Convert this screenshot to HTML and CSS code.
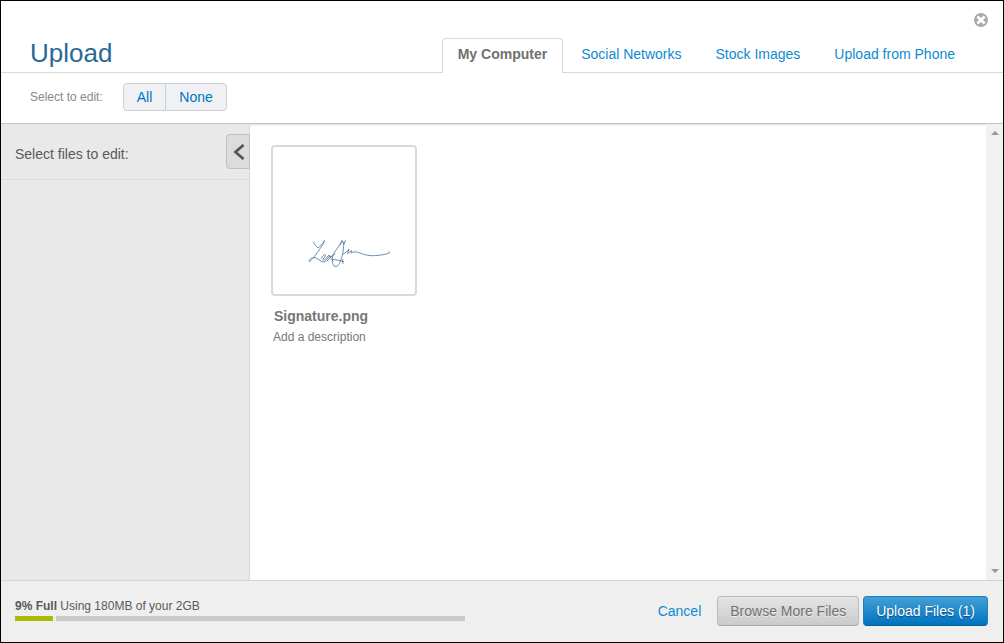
FILE: index.html
```html
<!DOCTYPE html>
<html lang="en">
<head>
    <meta charset="UTF-8">
    <meta name="viewport" content="width=device-width, initial-scale=1.0">
    <title>Upload</title>
    <link rel="stylesheet" href="styles.css">
</head>
<body>
    <div class="dialog">
        <button type="button" class="close" aria-label="Close">
            <svg width="14" height="14" viewBox="0 0 14 14">
                <circle cx="7" cy="7" r="7" fill="#aaa"/>
                <path d="M3.400 3.400l7.200 7.200M10.600 3.400L3.400 10.600" stroke="#fff" stroke-width="2.800"/>
            </svg>
        </button>

        <header class="header">
            <h1>Upload</h1>
            <nav class="tabs">
                <a href="#" class="tab active">My Computer</a>
                <a href="#" class="tab">Social Networks</a>
                <a href="#" class="tab">Stock Images</a>
                <a href="#" class="tab">Upload from Phone</a>
            </nav>
        </header>

        <div class="toolbar">
            <span class="toolbar-label" id="selectLabel">Select to edit:</span>
            <div class="btn-group" role="group" aria-labelledby="selectLabel">
                <button type="button">All</button>
                <button type="button">None</button>
            </div>
        </div>

        <main class="main">
            <aside class="sidebar">
                <div class="sidebar-head">
                    <p>Select files to edit:</p>
                    <button type="button" class="toggle" aria-label="Collapse panel">
                        <svg width="12" height="16" viewBox="0 0 12 16">
                            <path d="M10.500 1L2.500 8l8 7" fill="none" stroke="#555" stroke-width="2.800"/>
                        </svg>
                    </button>
                </div>
            </aside>

            <section class="files">
                <figure class="file">
                    <div class="thumb">
                        <svg width="84" height="30" viewBox="0 0 84 30" role="img" aria-label="Signature">
                            <g fill="none" stroke="#5f7fa6" stroke-width="0.900" stroke-linecap="round" stroke-linejoin="round">
                                <path d="M5.500 4c1 2 2 4 4.500 6 2-2 5-4 6.500-7.500C15 8 10 13 6.500 18.500 4 22 1 24.500 1 23c0-2 3-3.500 5-3.500 4 0 6 4.500 9.500 4.500 2 0 4-3 5-5"/>
                                <path d="M13.500 20c1-2 4-5 4-2.500 0 2-3 3-2.500 4.500 1.500 1 4-3 6-5l3.500 5.500M25 17l-6 6M21 19l3-1 3-2"/>
                                <path d="M32 7l2-4.500 2 3.500 1.500-3.500M34 3c-2 5-6 8-8.500 13-1.500 4-2 9 .5 12 3 1.500 5-1 6.500-5 2.500-6 3-12 3.500-19M25.500 21.500c3 0 6 1.500 10 2M34.500 21.500l.5 4"/>
                                <path d="M35.500 16c2-1 4-3.500 5.500-5l-1.500 4.500 4-3-.5 2.500c3-2 5-1 7.500-.5 4 1.500 8 3 13 3.200 5 0 10-.5 14.500-1.700 2-.5 3-1 4-1.500l-1-.5"/>
                            </g>
                        </svg>
                    </div>
                    <figcaption>
                        <strong class="file-name">Signature.png</strong>
                        <input type="text" class="file-desc" aria-label="Description" placeholder="Add a description">
                    </figcaption>
                </figure>
            </section>

            <div class="scrollbar" aria-hidden="true">
                <svg width="8" height="4" viewBox="0 0 8 4"><path d="M0 4l4-4 4 4z" fill="#999"/></svg>
                <svg width="8" height="4" viewBox="0 0 8 4"><path d="M0 0l4 4 4-4z" fill="#999"/></svg>
            </div>
        </main>

        <footer class="footer">
            <div class="storage">
                <p><strong>9% Full</strong> Using 180MB of your 2GB</p>
                <div class="meter">
                    <div class="meter-used" style="width: 9%"></div>
                </div>
            </div>
            <div class="actions">
                <a href="#" class="cancel">Cancel</a>
                <button type="button" class="btn">Browse More Files</button>
                <button type="button" class="btn btn-primary">Upload Files (1)</button>
            </div>
        </footer>
    </div>
</body>
</html>
```

FILE: styles.css
```css
* {
    box-sizing: border-box;
}
body {
    margin: 0;
    font-family: "Liberation Sans", Arial, sans-serif;
    font-size: 14px;
    line-height: 16px;
    color: #5a5a5a;
}
h1, p, figure {
    margin: 0;
}
svg {
    display: block;
    flex-shrink: 0;
}
button, input {
    font: inherit;
}
button {
    cursor: pointer;
}
a {
    color: #0d8bd1;
    text-decoration: none;
}

.dialog {
    position: relative;
    display: flex;
    flex-direction: column;
    min-height: 100vh;
    border: 1px solid #000;
    background: #fff;
}
.close {
    position: absolute;
    top: 12px;
    right: 15px;
    padding: 0;
    border: none;
    background: none;
}

/* header and tabs */
.header {
    display: flex;
    justify-content: space-between;
    align-items: flex-end;
    height: 72px;
    padding: 0 32px 0 29px;
    border-bottom: 1px solid #d9d9d9;
}
h1 {
    padding-bottom: 4px;
    font-size: 26px;
    font-weight: normal;
    line-height: 30px;
    color: #2a6896;
}
.tabs {
    display: flex;
    gap: 2px;
    margin-bottom: -1px;
}
.tab {
    padding: 7px 15px 11px;
    border: 1px solid transparent;
    border-bottom: none;
}
.tab.active {
    border-color: #d9d9d9;
    border-radius: 4px 4px 0 0;
    background: #fff;
    font-weight: bold;
    color: #707070;
}

.toolbar {
    display: flex;
    align-items: center;
    gap: 20px;
    padding: 10px 29px 12px;
    border-bottom: 1px solid #c6c6c6;
}
.toolbar-label {
    font-size: 12px;
    color: #888;
}
.btn-group {
    display: flex;
}
.btn-group button {
    padding: 5px 13px;
    border: 1px solid #ccd0d3;
    background: #eff1f4;
    color: #0077c0;
}
.btn-group button:first-child {
    border-radius: 4px 0 0 4px;
}
.btn-group button:last-child {
    margin-left: -1px;
    border-radius: 0 4px 4px 0;
}

/* content */
.main {
    display: flex;
    flex: 1;
}
.sidebar {
    width: 249px;
    border-right: 1px solid #d9d9d9;
    background: #e9e9e9;
}
.sidebar-head {
    display: flex;
    justify-content: space-between;
    align-items: center;
    padding: 10px 0;
    border-bottom: 1px solid #dedede;
}
.sidebar-head p {
    padding: 5px 0 0 14px;
}
.toggle {
    display: flex;
    align-items: center;
    width: 24px;
    height: 35px;
    margin-right: -1px;
    padding: 0 6px;
    border: 1px solid #c0c0c0;
    border-radius: 4px 0 0 4px;
    background: #dcdcdc;
}
.files {
    flex: 1;
    padding: 21px;
    box-shadow: inset 0 3px 2px -2px rgba(0, 0, 0, 0.15);
}
.file {
    width: 146px;
}
.thumb {
    display: flex;
    justify-content: center;
    align-items: flex-end;
    height: 151px;
    padding: 0 0 26px 12px;
    border: 2px solid #d9d9d9;
    border-radius: 4px;
}
figcaption {
    padding: 12px 2px 0;
}
.file-name {
    display: block;
    padding-left: 1px;
    color: #777;
}
.file-desc {
    display: block;
    width: 100%;
    margin-top: 5px;
    padding: 0;
    border: none;
    background: none;
    font-size: 12px;
    line-height: 16px;
}
.file-desc::placeholder {
    color: #777;
}
.scrollbar {
    display: flex;
    flex-direction: column;
    justify-content: space-between;
    align-items: center;
    width: 17px;
    padding: 7px 0;
    background: #f1f1f1;
}

/* footer */
.footer {
    display: flex;
    justify-content: space-between;
    padding: 15px 15px 16px 14px;
    border-top: 1px solid #d5d5d5;
    background: #efefef;
}
.storage {
    width: 450px;
    padding-top: 2px;
    font-size: 12px;
}
.meter {
    height: 5px;
    margin-top: 2px;
    background: #cacaca;
}
.meter-used {
    height: 5px;
    border-right: 3px solid #efefef;
    background: #acba06;
}
.actions {
    display: flex;
    align-items: center;
    gap: 4px;
}
.cancel {
    margin-right: 12px;
}
.btn {
    padding: 6px 12px;
    border: 1px solid #bbb;
    border-bottom-color: #a5a5a5;
    border-radius: 4px;
    background: linear-gradient(#e4e4e4, #cacbcd);
    color: #707070;
    text-shadow: 0 1px 0 #eee;
}
.btn-primary {
    border-color: #2180b9;
    border-bottom-color: #0a5e97;
    background: linear-gradient(#439fd6, #0073bf);
    color: #fff;
    text-shadow: 0 1px 1px #064f80;
}
```
